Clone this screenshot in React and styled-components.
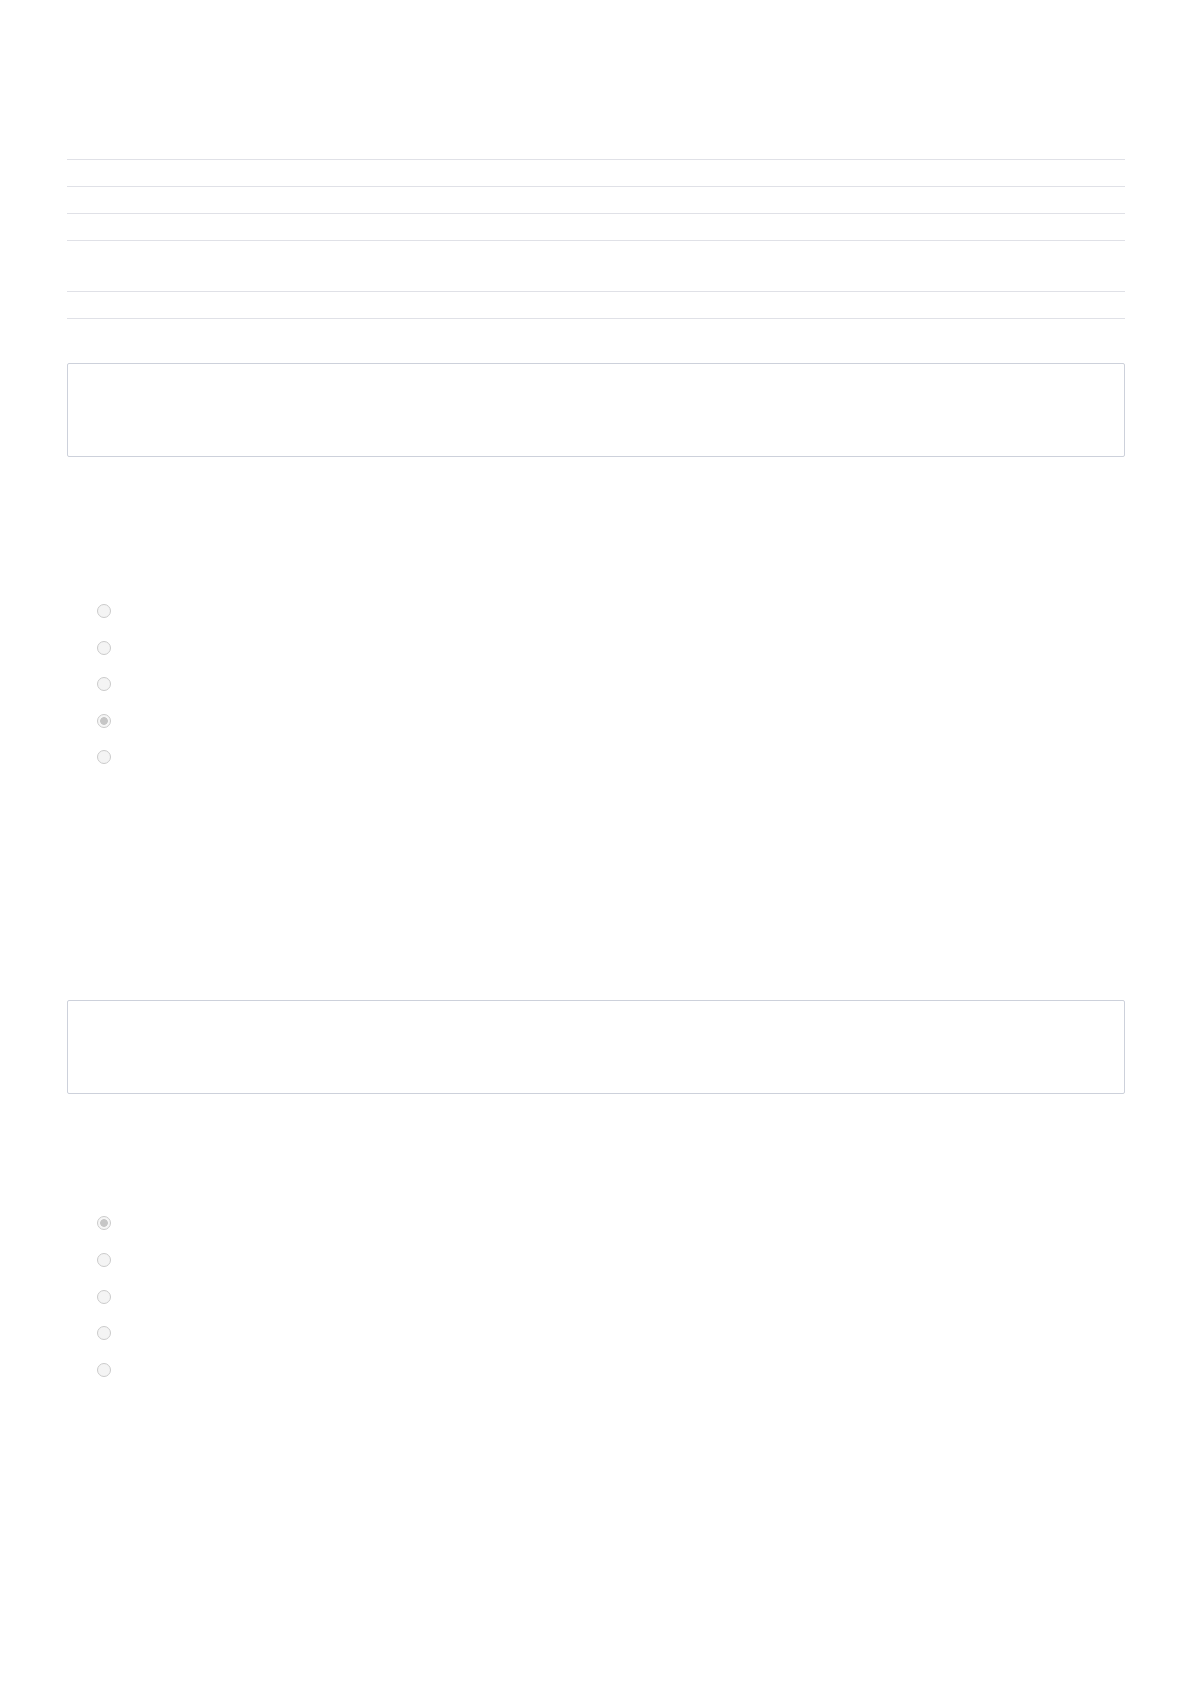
import React from "react";
import styled, { createGlobalStyle } from "styled-components";

const Global = createGlobalStyle`
  html, body { margin: 0; padding: 0; background: #ffffff; }
  body { font-family: "Liberation Sans", Arial, sans-serif; font-size: 14px; color: #ffffff; }
`;

const Page = styled.div`
  width: 1058px;
  margin-left: 67px;
  padding-top: 159px;
  min-height: 1684px;
  box-sizing: border-box;
`;

const RuleList = styled.div`
  display: flex;
  flex-direction: column;
  border-bottom: 1px solid #e0e1e7;
`;

const Rule = styled.div`
  height: ${(p) => p.$h}px;
  box-sizing: border-box;
  border-top: 1px solid #e0e1e7;
`;

const Box = styled.div`
  margin-top: ${(p) => p.$mt}px;
  height: 94px;
  box-sizing: border-box;
  border: 1px solid #cdd1db;
  border-radius: 2px;
`;

const RadioGroup = styled.div`
  margin-top: ${(p) => p.$mt}px;
  padding-left: 30px;
  display: flex;
  flex-direction: column;
  gap: ${(p) => p.$gap}px;
`;

const Radio = styled.input.attrs({ type: "radio", disabled: true })`
  appearance: none;
  -webkit-appearance: none;
  width: 14px;
  height: 14px;
  margin: 0;
  display: block;
  box-sizing: border-box;
  border-radius: 50%;
  border: 1px solid #cbcbcb;
  background: #f4f4f4;
  &:checked {
    background: radial-gradient(circle, #c6c6c6 0, #c6c6c6 3.5px, #f6f6f6 4.2px, #f6f6f6 100%);
  }
`;

const Spacer = styled.div`
  height: ${(p) => p.$h}px;
`;

export default function App() {
  return (
    <>
      <Global />
      <Page>
        <RuleList>
          <Rule $h={27} />
          <Rule $h={27} />
          <Rule $h={27} />
          <Rule $h={51} />
          <Rule $h={27} />
        </RuleList>
        <Box $mt={44} />
        <RadioGroup $mt={147} $gap={22.5}>
          {[0, 1, 2, 3, 4].map((i) => (
            <Radio key={i} name="q1" defaultChecked={i === 3} readOnly />
          ))}
        </RadioGroup>
        <Box $mt={236} />
        <RadioGroup $mt={122} $gap={22.8}>
          {[0, 1, 2, 3, 4].map((i) => (
            <Radio key={i} name="q2" defaultChecked={i === 0} readOnly />
          ))}
        </RadioGroup>
        <Spacer $h={300} />
      </Page>
    </>
  );
}
